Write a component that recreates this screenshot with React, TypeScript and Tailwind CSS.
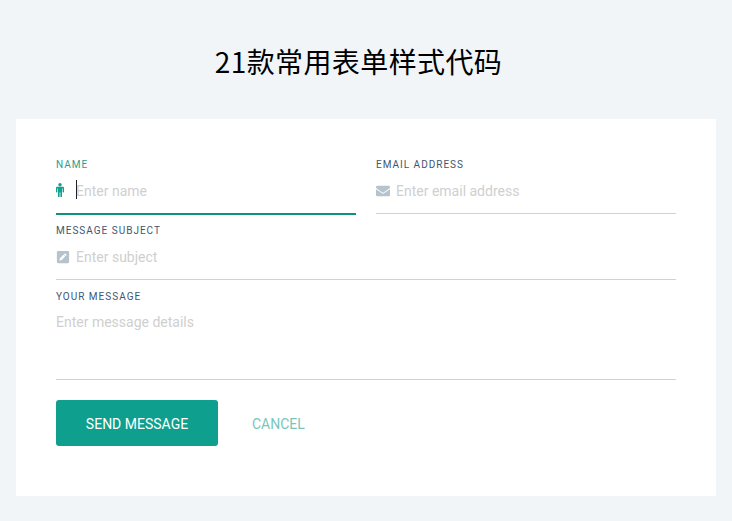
import { FaEnvelope, FaPenSquare } from "react-icons/fa";

const labelClass = "block text-[10px] leading-[12px] tracking-[1px] uppercase text-[#3f5670]";
const inputClass =
  "flex-1 min-w-0 bg-transparent outline-none text-sm leading-5 text-[#333] placeholder:text-[#cfcfcf]";

function MaleIcon() {
  return (
    <svg width="8" height="14" viewBox="0 0 8 14" fill="currentColor">
      <circle cx="4" cy="1.7" r="1.7" />
      <path d="M1 3.7h6a1 1 0 0 1 1 1v4a.7.7 0 0 1-1.4 0V5.6H6V14H4.4V9.5h-.8V14H2V5.6h-.6v3.1a.7.7 0 0 1-1.4 0v-4a1 1 0 0 1 1-1z" />
    </svg>
  );
}

export default function App() {
  return (
    <div className="min-h-[521px] bg-[#f1f5f8] px-4 font-['Roboto',sans-serif] overflow-hidden">
      <h1 className="h-[119px] pt-[40px] pr-[15px] text-center text-[28px] leading-[42px] tracking-[0.4px] font-normal text-black font-['Noto_Sans_CJK_SC','Noto_Sans_CJK_TC',sans-serif]">
        21款常用表单样式代码
      </h1>

      <form className="h-[377px] bg-white px-10 pt-[40px]">
        <div className="grid grid-cols-2 gap-x-5">
          <div className="h-[56px]">
            <label className="block text-[10px] leading-[12px] tracking-[1px] uppercase text-[#2a9d91]">Name</label>
            <div className="mt-[4px] flex h-[40px] items-start border-b-2 border-[#0e917f] pt-[6px]">
              <span className="w-5 shrink-0 pt-[2px] text-[#14a08f]">
                <MaleIcon />
              </span>
              <span className="relative flex flex-1">
                <input className={inputClass} placeholder="Enter name" />
                <span className="absolute left-0 top-[-1px] h-[19px] w-px bg-[#222]" />
              </span>
            </div>
          </div>
          <div className="h-[56px]">
            <label className={labelClass}>Email address</label>
            <div className="mt-[4px] flex h-[39px] items-start border-b border-[#d2d2d2] pt-[6px]">
              <span className="w-5 shrink-0 pt-[3px] text-[#b5c3cc]">
                <FaEnvelope size={14} />
              </span>
              <input className={inputClass} placeholder="Enter email address" />
            </div>
          </div>
        </div>

        <div className="mt-[10px] h-[56px]">
          <label className={labelClass}>Message subject</label>
          <div className="mt-[4px] flex h-[39px] items-start border-b border-[#d2d2d2] pt-[6px]">
            <span className="w-5 shrink-0 pt-[3px] text-[#b5c3cc]">
              <FaPenSquare size={14} />
            </span>
            <input className={inputClass} placeholder="Enter subject" />
          </div>
        </div>

        <div className="mt-[10px]">
          <label className={labelClass}>Your message</label>
          <div className="mt-[4px] h-[73px] border-b border-[#d2d2d2] pt-[5px]">
            <textarea className={`${inputClass} block w-full resize-none`} rows={2} placeholder="Enter message details" />
          </div>
        </div>

        <div className="mt-5 flex items-center">
          <button type="button" className="h-[46px] w-[162px] rounded-[3px] bg-[#0e9f8e] pt-[2px] text-sm text-white">
            SEND MESSAGE
          </button>
          <button type="button" className="ml-[34px] pt-[2px] text-sm text-[#7cc4ba]">
            CANCEL
          </button>
        </div>
      </form>
    </div>
  );
}
